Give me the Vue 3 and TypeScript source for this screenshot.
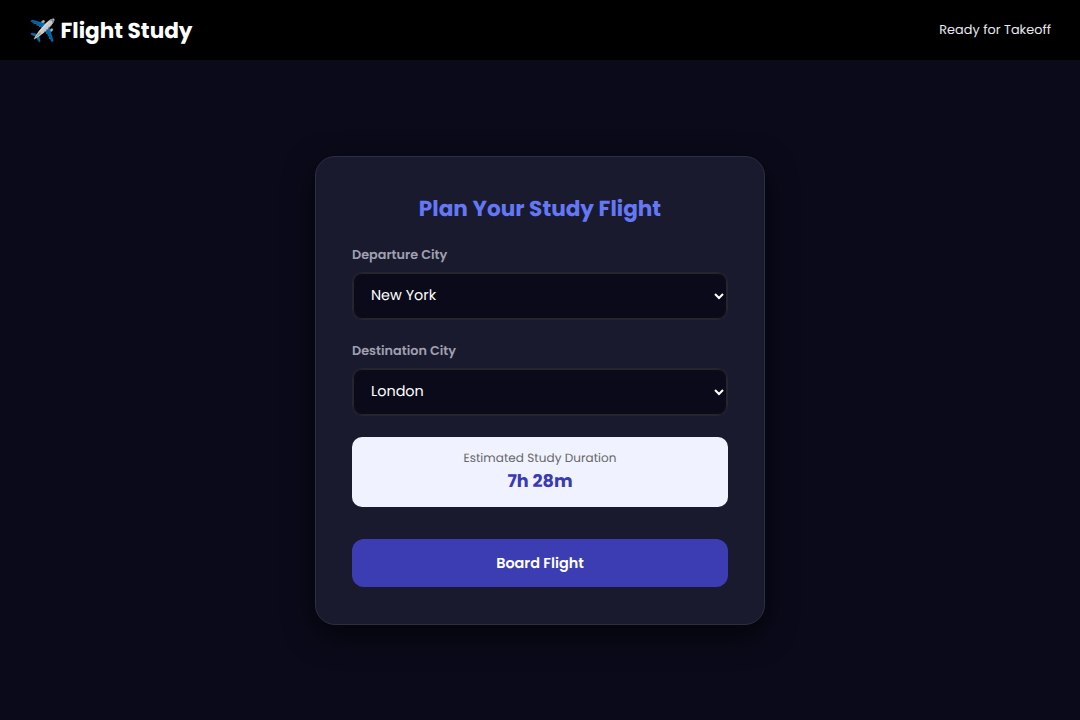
<script setup lang="ts">
const cities = ['New York', 'London', 'Paris', 'Tokyo', 'Dubai']
</script>

<template>
  <div class="page">
    <header class="top">
      <div class="brand">✈️ Flight Study</div>
      <div class="status">Ready for Takeoff</div>
    </header>
    <main class="main">
      <section class="card">
        <h2>Plan Your Study Flight</h2>
        <div class="field">
          <label>Departure City</label>
          <select>
            <option v-for="c in cities" :key="c" :selected="c === 'New York'">{{ c }}</option>
          </select>
        </div>
        <div class="field last">
          <label>Destination City</label>
          <select>
            <option v-for="c in cities" :key="c" :selected="c === 'London'">{{ c }}</option>
          </select>
        </div>
        <div class="duration">
          <div class="dlabel">Estimated Study Duration</div>
          <div class="dvalue">7h 28m</div>
        </div>
        <button class="board">Board Flight</button>
      </section>
    </main>
  </div>
</template>

<style>
body { margin: 0; background: #0a0a1a; }
</style>

<style scoped>
.page {
  height: 720px;
  display: flex;
  flex-direction: column;
  background: #0a0a1a;
  color: #fff;
  font-family: Poppins, Inter, "Open Sans", sans-serif;
  text-rendering: geometricPrecision;
}
.top {
  height: 60px;
  box-sizing: border-box;
  background: #000;
  display: flex;
  align-items: center;
  justify-content: space-between;
  padding: 0 29px;
}
.brand { font-size: 21.6px; font-weight: 700; }
.status { font-size: 12.8px; letter-spacing: 0.05px; padding-top: 2px; color: #e8e8ee; }
.main { flex: 1; display: flex; align-items: center; justify-content: center; }
.card {
  width: 450px;
  height: 469px;
  box-sizing: border-box;
  padding: 35px 36px;
  background: #1a1a2e;
  border: 1px solid #2d2d44;
  border-radius: 20px;
  box-shadow: 0 10px 30px rgba(0, 0, 0, 0.6);
}
h2 {
  margin: 0 0 22px;
  text-align: center;
  font-size: 21.6px;
  font-weight: 700;
  color: #6478f5;
}
.field { margin-bottom: 23px; }
.field.last { margin-bottom: 21px; }
label { display: block; margin-bottom: 7px; font-size: 12.8px; font-weight: 600; color: #a0a0b0; }
select {
  width: 100%;
  height: 48px;
  padding: 0 14px;
  background: #0a0a1a;
  color: #fff;
  border: 1px solid #25252f;
  box-shadow: inset 0 0 0 1px #25252f;
  border-radius: 10px;
  font: inherit;
  font-size: 14.4px;
  text-rendering: geometricPrecision;
}
.duration {
  height: 70px;
  box-sizing: border-box;
  background: #f0f2ff;
  border-radius: 10px;
  text-align: center;
  padding-top: 13px;
  margin-bottom: 32px;
}
.dlabel { font-size: 12px; letter-spacing: 0.05px; color: #666; }
.dvalue { margin-top: 1px; font-size: 17.6px; font-weight: 700; color: #3a3ab2; }
.board {
  width: 100%;
  height: 48px;
  padding: 3px 0 0;
  border: none;
  border-radius: 12px;
  background: #3d3db3;
  color: #fff;
  font: inherit;
  font-weight: 600;
  font-size: 14.4px;
  text-rendering: geometricPrecision;
}
</style>
